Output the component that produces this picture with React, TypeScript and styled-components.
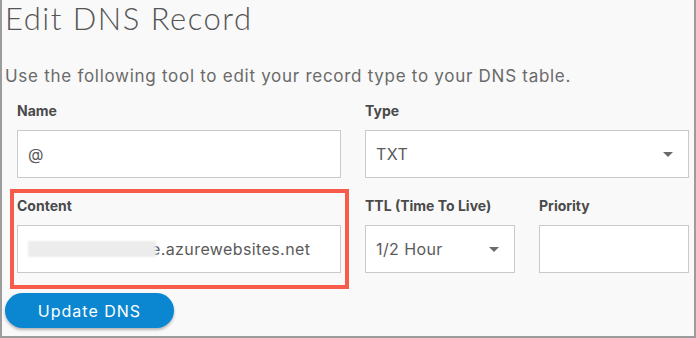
import React from "react";
import styled, { createGlobalStyle } from "styled-components";

const GlobalStyle = createGlobalStyle`
  html, body { margin: 0; padding: 0; background: #f9f9f9; }
  body { font-family: "Inter", "Liberation Sans", sans-serif; }
  * { box-sizing: border-box; }
`;

const Frame = styled.div`
  width: 696px;
  height: 338px;
  background: #f9f9f9;
  border-left: 2px solid #9c9c9c;
  border-right: 2px solid #9c9c9c;
  border-bottom: 2px solid #9c9c9c;
  padding: 0 0 0 3px;
  overflow: hidden;
`;

const Title = styled.h1`
  margin: 0;
  font-family: "Lato", "Inter", sans-serif;
  font-size: 31px;
  line-height: 36px;
  font-weight: 300;
  letter-spacing: 1.5px;
  color: #555;
`;

const Subtitle = styled.p`
  margin: 30px 0 0;
  font-size: 17px;
  line-height: 20px;
  font-weight: 400;
  letter-spacing: 0.72px;
  color: #6a6a6a;
`;

const FormGrid = styled.div`
  margin: 15.5px 0 0 12px;
  display: grid;
  grid-template-columns: 324px 150px 150px;
  column-gap: 24px;
  row-gap: 19px;
`;

const Field = styled.div<{ $span?: number; $highlight?: boolean }>`
  position: relative;
  display: flex;
  flex-direction: column;
  grid-column: span ${(p) => p.$span ?? 1};
  ${(p) =>
    p.$highlight &&
    `
    &::after {
      content: "";
      position: absolute;
      top: -7.5px;
      left: -7px;
      right: -8px;
      bottom: -16px;
      border: 4px solid #f75b4c;
      pointer-events: none;
    }
  `}
`;

const Label = styled.label`
  font-size: 14px;
  line-height: 17px;
  font-weight: 700;
  color: #4a4a4a;
  margin-bottom: 11px;
`;

const Box = styled.div`
  position: relative;
  height: 48px;
  background: #fff;
  border: 1px solid #cacaca;
  display: flex;
  align-items: center;
  padding: 0 10px;
  font-size: 16px;
  letter-spacing: 0.4px;
  color: #5a5a5a;
  white-space: nowrap;
`;

const Caret = styled.span`
  position: absolute;
  right: 15px;
  top: 50%;
  margin-top: -2px;
  width: 0;
  height: 0;
  border-left: 5px solid transparent;
  border-right: 5px solid transparent;
  border-top: 5px solid #6b6b6b;
`;

const Redacted = styled.span`
  display: inline-block;
  width: 128px;
  height: 16px;
  margin-right: -5px;
  position: relative;
  z-index: 1;
  background: #ececec;
  filter: blur(1px);
`;

const Button = styled.button`
  margin-top: 20.5px;
  width: 169px;
  height: 35px;
  border: none;
  border-radius: 18px;
  background: #0b87d2;
  color: #fff;
  font-family: "Inter", "Liberation Sans", sans-serif;
  font-size: 16px;
  letter-spacing: 1px;
  box-shadow: 0 2px 3px rgba(0, 0, 0, 0.28);
  display: block;
  padding: 0;
  cursor: pointer;
`;

export default function App() {
  return (
    <>
      <GlobalStyle />
      <Frame>
        <Title>Edit DNS Record</Title>
        <Subtitle>Use the following tool to edit your record type to your DNS table.</Subtitle>
        <FormGrid>
          <Field>
            <Label>Name</Label>
            <Box>@</Box>
          </Field>
          <Field $span={2}>
            <Label>Type</Label>
            <Box>
              TXT
              <Caret />
            </Box>
          </Field>
          <Field $highlight>
            <Label>Content</Label>
            <Box>
              <Redacted />
              e.azurewebsites.net
            </Box>
          </Field>
          <Field>
            <Label>TTL (Time To Live)</Label>
            <Box>
              1/2 Hour
              <Caret />
            </Box>
          </Field>
          <Field>
            <Label>Priority</Label>
            <Box />
          </Field>
        </FormGrid>
        <Button>Update DNS</Button>
      </Frame>
    </>
  );
}
